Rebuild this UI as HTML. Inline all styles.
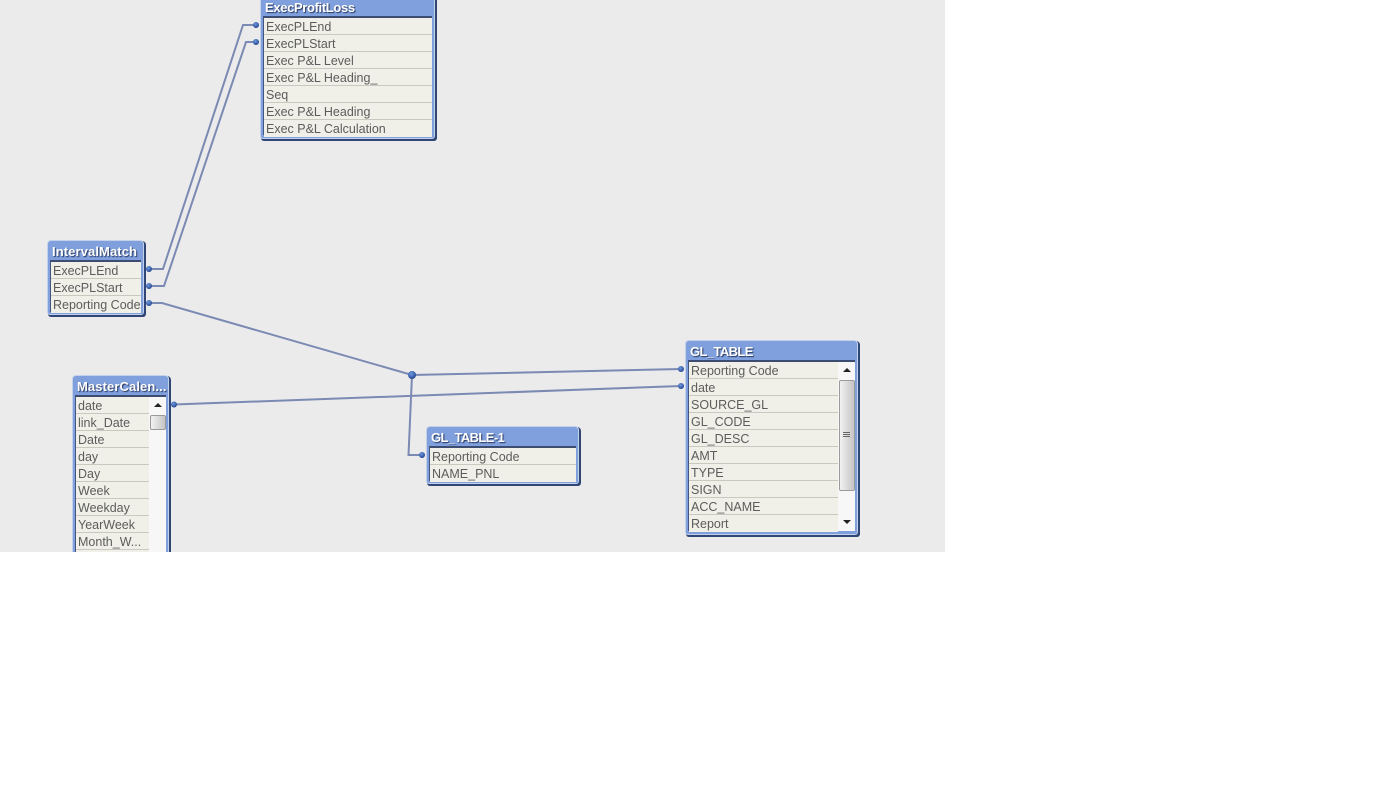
<!DOCTYPE html>
<html>
<head>
<meta charset="utf-8">
<style>
html,body{margin:0;padding:0;width:1376px;height:788px;overflow:hidden;background:#fff}
#c{position:absolute;left:0;top:0;width:945px;height:552px;background:#ebebeb;overflow:hidden}
svg{position:absolute;left:0;top:0}
.t{position:absolute;box-sizing:border-box;background:#7f9fdd;border:1px solid #c3d2ea;border-radius:4px 4px 3px 3px;box-shadow:2px 1px 0 #2f4677,1px 2px 0 #2f4677,2px 2px 0 #2f4677}
.h{position:absolute;left:3px;top:0;font:bold 13px/20px "Liberation Sans",sans-serif;color:#fff;text-shadow:1px 1px 1px #26365c;white-space:nowrap}
.b{position:absolute;background:#f0f0e8;border-top:2px solid #3d4d72;border-left:1px solid #44557f;box-sizing:border-box}
.r{position:absolute;left:0;height:17px;box-sizing:border-box;background:#f0f0e8;border-bottom:1px solid #c9c9c0;font:12.5px/18px "Liberation Sans",sans-serif;color:#5c5c5c;padding:0 0 0 2px;white-space:nowrap;overflow:hidden}
.sb{position:absolute;background:#f7f7f7}
.th{position:absolute;box-sizing:border-box;border:1px solid #9a9a9a;border-radius:2px;background:linear-gradient(90deg,#f2f2f2,#d2d2d2 70%,#c4c4c4)}
.up,.dn{position:absolute;width:0;height:0;border-left:4px solid transparent;border-right:4px solid transparent}
.up{border-bottom:4px solid #222}
.dn{border-top:4px solid #222}
.g{position:absolute;width:7px;height:1px;background:#666}
</style>
</head>
<body>
<div id="c">

<!-- ExecProfitLoss -->
<div class="t" style="left:260px;top:-10px;width:175px;height:149px">
  <div class="h" style="left:4px;top:7px;letter-spacing:-0.35px">ExecProfitLoss</div>
  <div class="b" style="left:2px;top:25px;width:169px;height:119px">
    <div class="r" style="top:0;width:168px">ExecPLEnd</div>
    <div class="r" style="top:17px;width:168px">ExecPLStart</div>
    <div class="r" style="top:34px;width:168px">Exec P&amp;L Level</div>
    <div class="r" style="top:51px;width:168px">Exec P&amp;L Heading_</div>
    <div class="r" style="top:68px;width:168px">Seq</div>
    <div class="r" style="top:85px;width:168px">Exec P&amp;L Heading</div>
    <div class="r" style="top:102px;width:168px;border-bottom:0">Exec P&amp;L Calculation</div>
  </div>
</div>

<!-- IntervalMatch -->
<div class="t" style="left:47px;top:240px;width:97px;height:75px">
  <div class="h" style="left:4px;top:1px;letter-spacing:0.1px">IntervalMatch</div>
  <div class="b" style="left:2px;top:19px;width:91px;height:52px">
    <div class="r" style="top:0;width:90px">ExecPLEnd</div>
    <div class="r" style="top:17px;width:90px">ExecPLStart</div>
    <div class="r" style="top:34px;width:90px;border-bottom:0">Reporting Code</div>
  </div>
</div>

<!-- MasterCalendar -->
<div class="t" style="left:72px;top:375px;width:97px;height:200px">
  <div class="h" style="left:4px;top:1px;letter-spacing:0.1px">MasterCalen...</div>
  <div class="b" style="left:2px;top:19px;width:91px;height:178px">
    <div class="r" style="top:0;width:73px">date</div>
    <div class="r" style="top:17px;width:73px">link_Date</div>
    <div class="r" style="top:34px;width:73px">Date</div>
    <div class="r" style="top:51px;width:73px">day</div>
    <div class="r" style="top:68px;width:73px">Day</div>
    <div class="r" style="top:85px;width:73px">Week</div>
    <div class="r" style="top:102px;width:73px">Weekday</div>
    <div class="r" style="top:119px;width:73px">YearWeek</div>
    <div class="r" style="top:136px;width:73px">Month_W...</div>
    <div class="r" style="top:153px;width:73px"></div>
    <div class="sb" style="left:73px;top:0;width:17px;height:176px"></div>
    <div class="up" style="left:78px;top:6px"></div>
    <div class="th" style="left:74px;top:18px;width:16px;height:15px"></div>
  </div>
</div>

<!-- GL_TABLE -->
<div class="t" style="left:685px;top:340px;width:173px;height:195px">
  <div class="h" style="left:4px;top:1px;letter-spacing:-0.6px">GL_TABLE</div>
  <div class="b" style="left:2px;top:19px;width:167px;height:171px">
    <div class="r" style="top:0;width:149px">Reporting Code</div>
    <div class="r" style="top:17px;width:149px">date</div>
    <div class="r" style="top:34px;width:149px">SOURCE_GL</div>
    <div class="r" style="top:51px;width:149px">GL_CODE</div>
    <div class="r" style="top:68px;width:149px">GL_DESC</div>
    <div class="r" style="top:85px;width:149px">AMT</div>
    <div class="r" style="top:102px;width:149px">TYPE</div>
    <div class="r" style="top:119px;width:149px">SIGN</div>
    <div class="r" style="top:136px;width:149px">ACC_NAME</div>
    <div class="r" style="top:153px;width:149px;border-bottom:0">Report</div>
    <div class="sb" style="left:149px;top:0;width:17px;height:169px"></div>
    <div class="up" style="left:154px;top:6px"></div>
    <div class="th" style="left:150px;top:18px;width:16px;height:111px"></div>
    <div class="g" style="left:154px;top:70px"></div>
    <div class="g" style="left:154px;top:72px"></div>
    <div class="g" style="left:154px;top:74px"></div>
    <div class="dn" style="left:154px;top:158px"></div>
  </div>
</div>

<!-- GL_TABLE-1 -->
<div class="t" style="left:426px;top:426px;width:153px;height:58px">
  <div class="h" style="left:4px;top:1px;letter-spacing:-0.6px">GL_TABLE-1</div>
  <div class="b" style="left:2px;top:19px;width:147px;height:35px">
    <div class="r" style="top:0;width:146px">Reporting Code</div>
    <div class="r" style="top:17px;width:146px;border-bottom:0">NAME_PNL</div>
  </div>
</div>

<svg width="945" height="552" viewBox="0 0 945 552">
  <defs>
    <radialGradient id="d" cx="40%" cy="35%" r="70%">
      <stop offset="0" stop-color="#6f9be0"/>
      <stop offset="1" stop-color="#1f3f8c"/>
    </radialGradient>
  </defs>
  <g fill="none" stroke="#7b8ab3" stroke-width="2">
    <path d="M149 269H163L243 25H256"/>
    <path d="M149 286H164L246 42H256"/>
    <path d="M149 303H162L412 375L681 369"/>
    <path d="M174 404.500L681 386"/>
    <path d="M412 375L408.500 455H422"/>
  </g>
  <g fill="url(#d)">
    <circle cx="256" cy="25" r="3"/>
    <circle cx="256" cy="42" r="3"/>
    <circle cx="149" cy="269" r="3"/>
    <circle cx="149" cy="286" r="3"/>
    <circle cx="149" cy="303" r="3"/>
    <circle cx="174" cy="404.500" r="3"/>
    <circle cx="681" cy="369" r="3"/>
    <circle cx="681" cy="386" r="3"/>
    <circle cx="422" cy="455" r="3"/>
    <circle cx="412" cy="375" r="4"/>
  </g>
</svg>
</div>
</body>
</html>
